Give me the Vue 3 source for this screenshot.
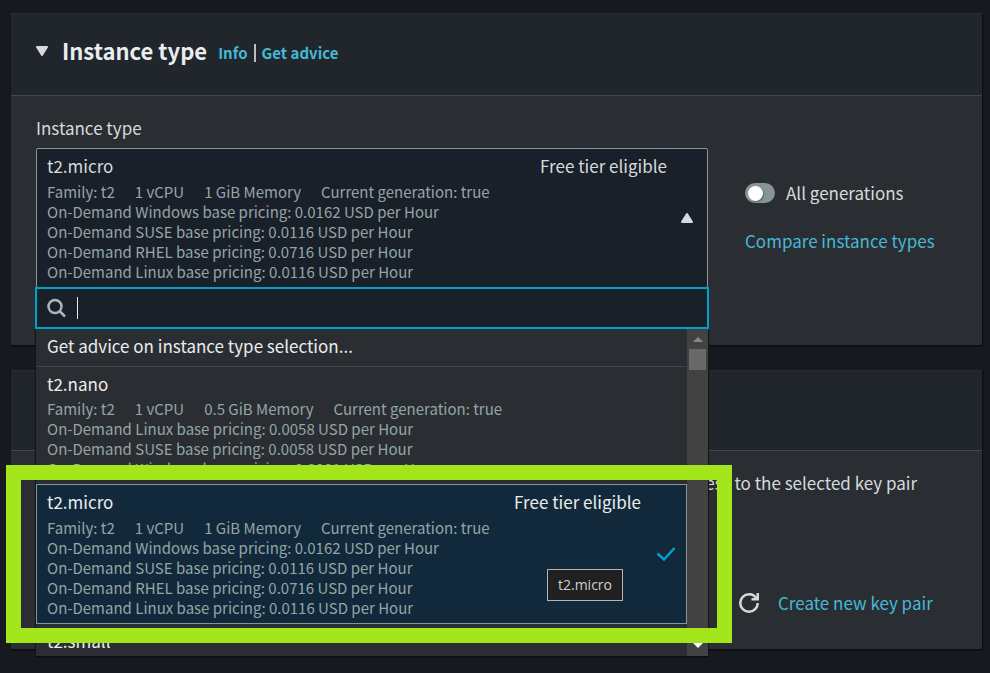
<script setup>
import { ref } from 'vue'

const query = ref('')
const allGenerations = ref(false)

const micro = {
  name: 't2.micro',
  tag: 'Free tier eligible',
  specs: ['Family: t2', '1 vCPU', '1 GiB Memory', 'Current generation: true'],
  prices: [
    'On-Demand Windows base pricing: 0.0162 USD per Hour',
    'On-Demand SUSE base pricing: 0.0116 USD per Hour',
    'On-Demand RHEL base pricing: 0.0716 USD per Hour',
    'On-Demand Linux base pricing: 0.0116 USD per Hour',
  ],
}

const options = [
  {
    name: 't2.nano',
    specs: ['Family: t2', '1 vCPU', '0.5 GiB Memory', 'Current generation: true'],
    prices: [
      'On-Demand Linux base pricing: 0.0058 USD per Hour',
      'On-Demand SUSE base pricing: 0.0058 USD per Hour',
      'On-Demand Windows base pricing: 0.0081 USD per Hour',
    ],
  },
  { ...micro, selected: true },
  { name: 't2.small', specs: [], prices: [] },
]
</script>

<template>
  <main class="page">
    <section class="card">
      <header class="card-header">
        <button class="collapse" type="button" aria-label="Collapse section">
          <svg class="caret" viewBox="0 0 12 10"><path d="M1 1h10L6 9z" /></svg>
        </button>
        <h2>Instance type</h2>
        <nav class="header-links">
          <a href="#info">Info</a>
          <span class="divider"></span>
          <a href="#advice">Get advice</a>
        </nav>
      </header>

      <div class="card-body columns">
        <div>
          <label class="field-label" for="instance-type">Instance type</label>
          <div class="select">
            <button id="instance-type" class="trigger" type="button" aria-expanded="true">
              <span class="details">
                <span class="title-row">
                  <span>{{ micro.name }}</span>
                  <span>{{ micro.tag }}</span>
                </span>
                <span class="specs">
                  <span v-for="spec in micro.specs" :key="spec">{{ spec }}</span>
                </span>
                <span v-for="price in micro.prices" :key="price" class="price">{{ price }}</span>
              </span>
              <svg class="caret" viewBox="0 0 12 10"><path d="M1 9h10L6 1z" /></svg>
            </button>

            <div class="dropdown">
              <div class="search">
                <svg class="search-icon" viewBox="0 0 20 20">
                  <circle cx="8" cy="8.5" r="6.5" />
                  <path d="M12.500 13l5.500 5.500" />
                </svg>
                <span class="text-cursor"></span>
                <input v-model="query" type="text" aria-label="Search instance types" />
              </div>
              <div class="menu">
                <div class="options" role="listbox">
                  <div class="option advice" role="option">
                    Get advice on instance type selection...
                  </div>
                  <div
                    v-for="option in options"
                    :key="option.name"
                    class="option"
                    :class="{ selected: option.selected }"
                    role="option"
                    :aria-selected="!!option.selected"
                  >
                    <div class="details">
                      <div class="title-row">
                        <span>{{ option.name }}</span>
                        <span>{{ option.tag }}</span>
                      </div>
                      <div class="specs">
                        <span v-for="spec in option.specs" :key="spec">{{ spec }}</span>
                      </div>
                      <div v-for="price in option.prices" :key="price" class="price">{{ price }}</div>
                    </div>
                    <svg v-if="option.selected" class="check" viewBox="0 0 20 16">
                      <path d="M1.500 7.500l6.500 6L18.500 2" />
                    </svg>
                  </div>
                </div>
                <div class="scrollbar">
                  <svg class="arrow" viewBox="0 0 10 5"><path d="M0 5h10L5 0z" /></svg>
                  <span class="thumb"></span>
                  <svg class="arrow down" viewBox="0 0 10 5"><path d="M0 0h10L5 5z" /></svg>
                </div>
              </div>
              <div class="tooltip" role="tooltip">t2.micro</div>
              <div class="highlight"></div>
            </div>
          </div>
        </div>

        <div class="side">
          <label class="toggle">
            <input v-model="allGenerations" type="checkbox" role="switch" />
            <span>All generations</span>
          </label>
          <a href="#compare">Compare instance types</a>
        </div>
      </div>
    </section>

    <section class="card">
      <header class="card-header"></header>
      <div class="card-body key-pair">
        <p>access to the selected key pair</p>
        <div class="columns">
          <div></div>
          <div class="key-actions">
            <button class="refresh" type="button" aria-label="Refresh key pairs">
              <svg viewBox="0 0 16 16">
                <path d="M10 5h5V0" />
                <path d="M15 8a7 7 0 0 1-14 0 7 7 0 0 1 7-7 6.900 6.900 0 0 1 6.300 4" />
              </svg>
            </button>
            <a href="#create">Create new key pair</a>
          </div>
        </div>
      </div>
    </section>
  </main>
</template>

<style>
body {
  background: #16191f;
}
</style>

<style scoped>
* {
  box-sizing: border-box;
}

.page {
  display: flex;
  flex-direction: column;
  gap: 25px;
  padding: 13px 8px 24px 11px;
  overflow-x: hidden;
  color: #d5dbdb;
  font: 17px/24px "Noto Sans CJK SC", "Noto Sans", sans-serif;
}

button {
  padding: 0;
  border: 0;
  background: none;
  color: inherit;
  font: inherit;
  text-align: left;
}

a {
  color: #44b9d6;
  text-decoration: none;
  white-space: nowrap;
}

.card {
  background: #2a2e33;
  box-shadow: 0 1px 1px #0b0d10, 1px 1px 1px #0f1115;
}

.card-header {
  display: flex;
  align-items: center;
  min-height: 81px;
  padding: 0 25px 8px;
  border-top: 1px solid #2a2e33;
  border-bottom: 1px solid #414750;
  background: #21252c;
}

.card:first-child .card-header {
  min-height: 83px;
}

.collapse {
  display: flex;
  margin-right: 14px;
}

.caret {
  flex: none;
  width: 12px;
  height: 10px;
  fill: currentColor;
  stroke: currentColor;
  stroke-width: 2;
  stroke-linejoin: round;
}

h2 {
  margin: 0 0 2px;
  color: #eaeded;
  font-size: 22px;
  line-height: 28px;
}

.header-links {
  display: flex;
  align-items: center;
  gap: 6px;
  margin: 4px 0 0 11px;
  font-size: 15px;
  font-weight: 700;
}

.divider {
  width: 2px;
  height: 18px;
  background: #b9bfbf;
}

.card-body {
  padding: 20px 25px 57px;
}

.columns {
  display: grid;
  grid-template-columns: 3fr 1fr;
  gap: 25px;
}

.field-label {
  display: block;
  padding-bottom: 8px;
}

.select {
  position: relative;
}

.trigger {
  display: flex;
  align-items: center;
  width: 100%;
  padding: 5px 14px 5px 10px;
  border: 1px solid #879596;
  border-radius: 2px;
  background: #1a2029;
}

.details {
  flex: 1;
  display: flex;
  flex-direction: column;
}

.trigger .title-row {
  padding-right: 14px;
}

.title-row {
  display: flex;
  justify-content: space-between;
  margin-bottom: 4px;
  line-height: 24px;
}

.specs,
.price {
  color: #95a5a6;
  font-size: 15px;
  line-height: 20px;
}

.specs {
  display: flex;
  gap: 20px;
}

.dropdown {
  position: absolute;
  z-index: 1;
  top: 100%;
  left: 0;
  right: 0;
}

.search {
  display: flex;
  align-items: center;
  height: 42px;
  margin: -1px -1px 0;
  padding: 0 10px;
  border: 2px solid #00a1c9;
  background: #1a2029;
}

.search-icon {
  width: 20px;
  height: 20px;
  fill: none;
  stroke: #aab7b8;
  stroke-width: 2.5;
}

.text-cursor {
  width: 1px;
  height: 22px;
  margin-left: 10px;
  background: #eaeded;
}

.search input {
  flex: 1;
  min-width: 0;
  padding: 0;
  border: 0;
  outline: 0;
  background: none;
  color: #d5dbdb;
  font: inherit;
}

.menu {
  display: flex;
  height: 327px;
  overflow: hidden;
  background: #2a2e33;
  box-shadow: 0 1px 1px #0b0d10, 1px 1px 1px #16191f, -1px 1px 1px #16191f;
}

.options {
  flex: 1;
  color: #eaeded;
}

.option {
  display: flex;
  align-items: center;
  margin-bottom: -1px;
  padding: 5px 10px;
  border: 1px solid transparent;
  border-top-color: #414750;
}

.option .title-row {
  margin-bottom: 3px;
}

.option.advice {
  height: 38px;
  padding: 4px 10px 8px;
  border-top-color: transparent;
}

.option.selected {
  position: relative;
  border-color: #879596;
  background: #12293b;
}

.option.selected .title-row {
  margin-bottom: 4px;
  padding-right: 15px;
}

.check {
  flex: none;
  width: 20px;
  height: 16px;
  fill: none;
  stroke: #00a1c9;
  stroke-width: 2.5;
}

.scrollbar {
  display: flex;
  flex-direction: column;
  align-items: center;
  width: 21px;
  padding: 8px 0;
  background: #424242;
}

.arrow {
  width: 10px;
  height: 5px;
  fill: #868686;
}

.arrow.down {
  margin-top: auto;
  fill: #ffffff;
}

.thumb {
  width: 17px;
  height: 21px;
  margin-top: 7px;
  background: #686868;
}

.tooltip {
  position: absolute;
  top: 281px;
  right: 85px;
  width: 76px;
  padding: 3px 0;
  border: 1px solid #b5b5b5;
  background: #202020;
  color: #d0d0d0;
  font: 14px/24px "Open Sans", sans-serif;
  text-align: center;
}

.highlight {
  position: absolute;
  top: 177px;
  left: -30px;
  right: -24px;
  height: 178px;
  border: 15px solid #a3e61b;
  pointer-events: none;
}

.side {
  display: flex;
  flex-direction: column;
  gap: 24px;
  padding: 65px 0 0 12px;
}

.toggle {
  display: flex;
  align-items: center;
  gap: 11px;
  white-space: nowrap;
}

.toggle input {
  display: flex;
  align-items: center;
  width: 30px;
  height: 20px;
  margin: 0;
  padding: 0 3px;
  border-radius: 10px;
  appearance: none;
  background: #879596;
}

.toggle input::before {
  width: 15px;
  height: 15px;
  border-radius: 50%;
  background: #ffffff;
  box-shadow: 1px 1px 1px #5a6566;
  content: "";
}

.toggle input:checked::before {
  margin-left: auto;
}

.key-pair {
  padding: 20px 25px 34px;
}

.key-pair p {
  margin: 0 0 96px;
  padding-right: 40px;
  text-align: right;
}

.key-actions {
  display: flex;
  align-items: center;
  gap: 19px;
  padding-left: 6px;
}

.refresh {
  display: flex;
}

.refresh svg {
  width: 20px;
  height: 20px;
  fill: none;
  stroke: #d5dbdb;
  stroke-width: 2;
}
</style>
